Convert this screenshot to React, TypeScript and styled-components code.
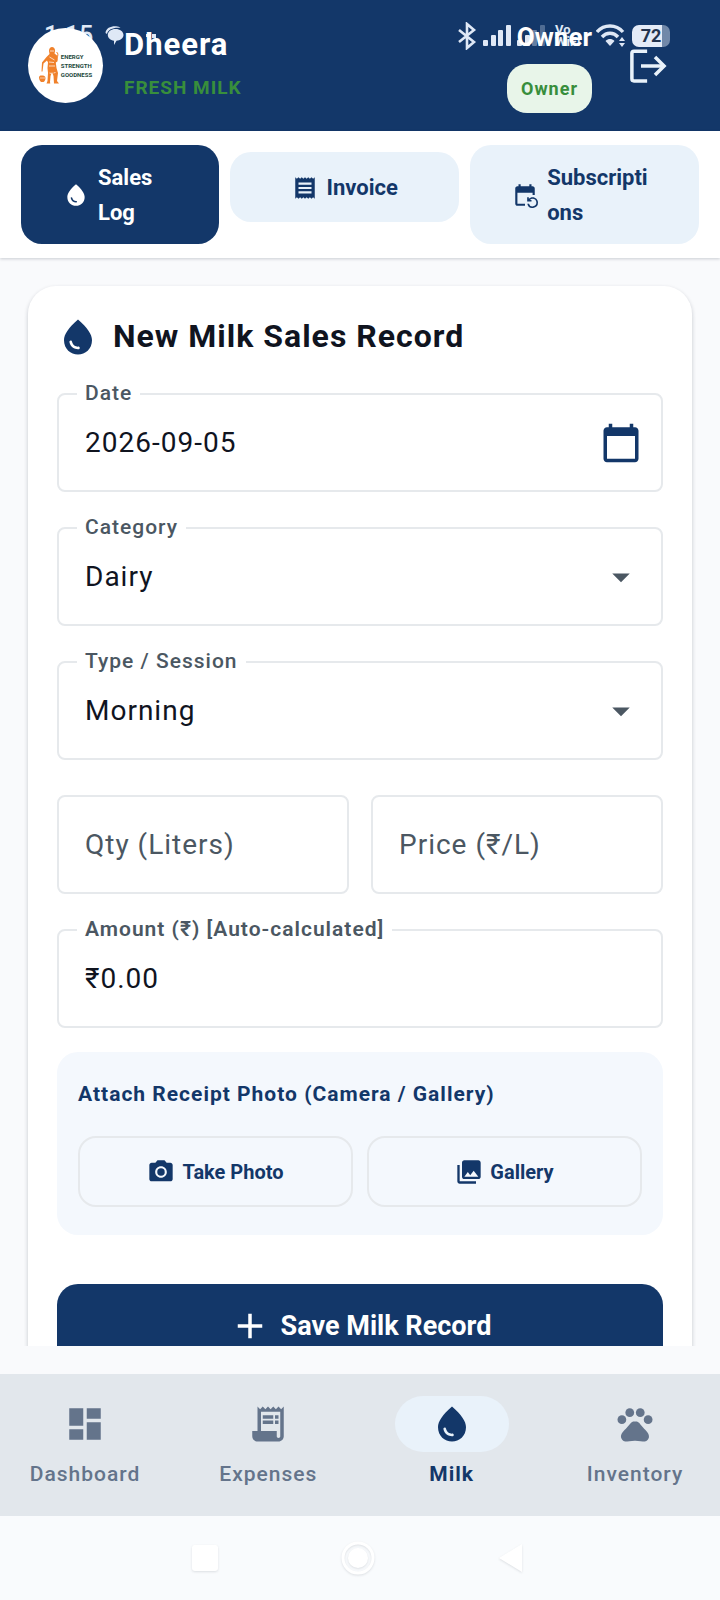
import { useState } from 'react';
import type { ReactNode } from 'react';
import styled, { createGlobalStyle } from 'styled-components';
import {
  MdAdd,
  MdArrowDropDown,
  MdCalendarToday,
  MdCameraAlt,
  MdDashboard,
  MdEventRepeat,
  MdPets,
  MdPhotoLibrary,
  MdReceipt,
  MdReceiptLong,
  MdWaterDrop,
} from 'react-icons/md';

const navy = '#133769';
const paleBlue = '#e9f2fa';
const line = '#e6e9ec';
const slate = '#64748b';

const GlobalStyle = createGlobalStyle`
  * {
    box-sizing: border-box;
  }

  body {
    margin: 0;
    background: #f9fafc;
    font-family: Roboto, 'Noto Sans', sans-serif;
  }

  button, input, select {
    font-family: inherit;
  }

  svg {
    display: block;
    flex-shrink: 0;
  }
`;

const Screen = styled.div`
  display: flex;
  flex-direction: column;
  height: 100vh;
  overflow: hidden;
`;

/* Header */

const Header = styled.header`
  position: relative;
  flex-shrink: 0;
  background: ${navy};
`;

// The system status bar is drawn edge to edge behind the header content
const StatusBar = styled.div`
  position: absolute;
  inset: 0 0 auto 0;
  display: flex;
  align-items: center;
  justify-content: space-between;
  height: 72px;
  padding: 0 50px 0 44px;
  color: #dfe8f6;
`;

const StatusGroup = styled.div`
  display: flex;
  align-items: center;
  gap: 6px;
`;

const Clock = styled.span`
  font-size: 25px;
  line-height: 28px;
  font-weight: 500;
  margin-right: 6px;
`;

const Carrier = styled.span`
  display: flex;
  flex-direction: column;
  width: 39px;
  padding-left: 4px;
  font-size: 13px;
  line-height: 12px;
  font-weight: 700;
`;

const Battery = styled.span`
  width: 38px;
  height: 22px;
  border-radius: 7px;
  background: linear-gradient(90deg, #e4ebf7 30px, #7188a9 30px);
  color: #23344f;
  font-size: 18px;
  line-height: 22px;
  font-weight: 700;
  text-align: center;
`;

const HeaderContent = styled.div`
  position: relative;
  display: flex;
  align-items: center;
  min-height: 131px;
  padding: 0 32px 0 28px;
`;

const Logo = styled.div`
  display: flex;
  align-items: center;
  justify-content: center;
  gap: 1px;
  width: 75px;
  height: 75px;
  border-radius: 50%;
  background: #fff;
`;

const LogoText = styled.div`
  color: #1d4a3c;
  font-size: 6px;
  line-height: 9px;
  font-weight: 700;
`;

const Brand = styled.div`
  flex: 1;
  margin-left: 21px;
`;

const BrandName = styled.h1`
  margin: 0;
  color: #fff;
  font-size: 31px;
  line-height: 44px;
  font-weight: 700;
  letter-spacing: 1px;
`;

const BrandTag = styled.p`
  margin: 0;
  color: #388e3c;
  font-size: 19px;
  line-height: 41px;
  font-weight: 700;
  letter-spacing: 1px;
`;

const Account = styled.div`
  display: flex;
  flex-direction: column;
  align-items: flex-end;
  gap: 8px;
`;

const AccountName = styled.span`
  color: #fff;
  font-size: 26px;
  line-height: 38px;
  font-weight: 700;
`;

const RoleBadge = styled.span`
  padding: 0 14px;
  border-radius: 20px;
  background: #e8f5e9;
  color: #388e3c;
  font-size: 18px;
  line-height: 49px;
  font-weight: 700;
  letter-spacing: 1px;
`;

const IconButton = styled.button`
  display: flex;
  align-items: center;
  justify-content: center;
  width: 80px;
  height: 80px;
  margin: 0;
  padding: 0;
  border: none;
  background: none;
  color: ${navy};
  cursor: pointer;
`;

const LogoutButton = styled(IconButton)`
  margin-left: 16px;
  color: #e9f2fa;
`;

/* Section tabs */

const Tabs = styled.nav`
  position: relative;
  display: grid;
  grid-template-columns: 13fr 15fr 15fr;
  gap: 11px;
  flex-shrink: 0;
  padding: 14px 21px;
  background: #fff;
  box-shadow: 0 1px 3px rgba(15, 23, 42, 0.2);
`;

const TabSlot = styled.div`
  display: flex;
  align-items: center;
  align-self: start;
  min-height: 84px;
`;

const Tab = styled.button<{ $active?: boolean }>`
  display: flex;
  align-items: center;
  justify-content: center;
  gap: 9px;
  width: 100%;
  min-height: 70px;
  padding: 15px 42px 14px;
  border: none;
  border-radius: 21px;
  background: ${({ $active }) => ($active ? navy : paleBlue)};
  color: ${({ $active }) => ($active ? '#fff' : navy)};
  font-size: 22px;
  line-height: 35px;
  font-weight: 700;
  text-align: left;
  overflow-wrap: anywhere;
  cursor: pointer;
`;

/* Form */

const Main = styled.main`
  flex: 1;
  min-height: 0;
  margin-bottom: 28px;
  padding: 28px 28px 0;
  overflow: hidden;
`;

const Card = styled.form`
  padding: 29px;
  border-radius: 28px;
  background: #fff;
  box-shadow: 0 2px 4px rgba(15, 23, 42, 0.22);
`;

const CardTitle = styled.h2`
  display: flex;
  align-items: center;
  gap: 14px;
  margin: 0 0 35px;
  color: #10141f;
  font-size: 32px;
  line-height: 43px;
  font-weight: 700;
  letter-spacing: 1px;

  svg {
    color: ${navy};
  }
`;

const Fields = styled.div`
  display: flex;
  flex-direction: column;
  gap: 35px;
`;

const FieldRow = styled.div`
  display: grid;
  grid-template-columns: 1fr 1fr;
  gap: 22px;
`;

const FieldBox = styled.div`
  position: relative;
  display: flex;
  align-items: center;
  height: 99px;
  border: 2px solid ${line};
  border-radius: 8px;
`;

const FieldLabel = styled.label<{ $resting?: boolean; $strong?: boolean }>`
  position: absolute;
  left: 18px;
  top: ${({ $resting }) => ($resting ? '50%' : '-2px')};
  transform: translateY(-50%);
  padding: 0 8px;
  background: #fff;
  color: #4b5762;
  font-size: ${({ $resting }) => ($resting ? '28px' : '21px')};
  line-height: 28px;
  font-weight: ${({ $resting, $strong }) => ($strong ? 600 : $resting ? 400 : 500)};
  letter-spacing: 1px;
  pointer-events: none;
`;

const valueStyle = `
  flex: 1;
  width: 100%;
  min-width: 0;
  height: 100%;
  padding: 0 26px;
  border: none;
  outline: none;
  background: transparent;
  color: #10141f;
  font-size: 28px;
  letter-spacing: 1px;
`;

const TextInput = styled.input`
  ${valueStyle}
`;

const SelectInput = styled.select`
  ${valueStyle}
  appearance: none;
`;

const Caret = styled.span`
  position: absolute;
  right: 19px;
  color: #4b5762;
  pointer-events: none;
`;

const Attach = styled.section`
  margin: 24px 0 49px;
  padding: 22px 21px 28px;
  border-radius: 21px;
  background: #f4f8fd;
`;

const AttachTitle = styled.h3`
  margin: 0 0 21px;
  color: ${navy};
  font-size: 21px;
  line-height: 41px;
  font-weight: 700;
  letter-spacing: 1px;
`;

const AttachActions = styled.div`
  display: grid;
  grid-template-columns: 1fr 1fr;
  gap: 14px;
`;

const OutlineButton = styled.button`
  display: flex;
  align-items: center;
  justify-content: center;
  gap: 7px;
  height: 71px;
  border: 2px solid ${line};
  border-radius: 18px;
  background: transparent;
  color: ${navy};
  font-size: 20px;
  font-weight: 700;
  cursor: pointer;
`;

const SaveButton = styled.button`
  display: flex;
  align-items: center;
  justify-content: center;
  gap: 10px;
  width: 100%;
  height: 84px;
  border: none;
  border-radius: 21px;
  background: ${navy};
  color: #fff;
  font-size: 27px;
  font-weight: 700;
  cursor: pointer;
`;

/* Bottom navigation */

const BottomNav = styled.nav`
  display: flex;
  justify-content: space-between;
  flex-shrink: 0;
  height: 142px;
  padding: 22px 28px 0;
  background: #e2e7ec;
`;

const NavLink = styled.a<{ $active?: boolean }>`
  display: flex;
  flex-direction: column;
  align-items: center;
  gap: 8px;
  width: 114px;
  color: ${({ $active }) => ($active ? navy : slate)};
  font-size: 21px;
  line-height: 28px;
  font-weight: ${({ $active }) => ($active ? 700 : 500)};
  letter-spacing: 1px;
  text-decoration: none;
`;

const NavPill = styled.span<{ $active?: boolean }>`
  display: flex;
  align-items: center;
  justify-content: center;
  width: 100%;
  height: 56px;
  border-radius: 28px;
  background: ${({ $active }) => ($active ? paleBlue : 'transparent')};
`;

const SystemNav = styled.div`
  display: flex;
  align-items: center;
  justify-content: center;
  gap: 117px;
  flex-shrink: 0;
  height: 84px;
  padding-right: 4px;
  background: #f9fbfd;

  svg {
    filter: drop-shadow(0 1px 1px rgba(15, 23, 42, 0.12));
  }
`;

const SignalIcon = ({ faint }: { faint?: boolean }) => (
  <svg width="28" height="24" viewBox="0 0 28 24" fill="currentColor">
    <rect x="0" y="16" width="5" height="6" rx="1" />
    <rect x="8" y="11" width="5" height="11" rx="1" />
    <rect x="15" y="6" width="5" height="16" rx="1" opacity={faint ? 0.4 : 1} />
    <rect x="23" y="1" width="5" height="21" rx="1" opacity={faint ? 0.3 : 1} />
  </svg>
);

const BluetoothIcon = () => (
  <svg width="20" height="28" viewBox="0 0 20 28" fill="none" stroke="currentColor" strokeWidth="2.6">
    <path d="M2 8l15 12-7 6V2l7 6L2 20" />
  </svg>
);

const WifiIcon = () => (
  <svg width="30" height="24" viewBox="0 0 30 24" fill="none" stroke="currentColor" strokeWidth="3.4">
    <path d="M1 8C8 0 20 0 27 8" />
    <path d="M6 13c4.500-5 11.500-5 16 0" />
    <path d="M14 22l-4.500-5c3-2.600 6-2.600 9 0z" fill="currentColor" stroke="none" />
    <path d="M26 13l3 4h-6zM26 23l3-4h-6z" fill="currentColor" stroke="none" />
  </svg>
);

const ChatIcon = () => (
  <svg width="19" height="20" viewBox="0 0 19 20" fill="currentColor">
    <path d="M0.500 7C1 2 6 0 11 0.300c2 .2 3.500.8 4.500 1.500C9 1 3 3 2 8z" />
    <path d="M10.500 3C15 3 18.500 5.600 18.500 9S15 14.500 11.500 14.800L9 19v-4.300C5.500 14.200 2.800 12 2.800 9c0-3.400 3.300-6 7.700-6z" />
  </svg>
);

const MoreMarks = () => (
  <svg width="34" height="20" viewBox="0 0 34 20" fill="currentColor">
    <rect x="16" y="8" width="5" height="3" />
    <rect x="22" y="8" width="4" height="4" />
  </svg>
);

const LogoutIcon = () => (
  <svg width="42" height="42" viewBox="0 0 24 24" fill="none" stroke="currentColor" strokeWidth="2">
    <path d="M11.500 3.500H4A1.200 1.200 0 0 0 2.800 4.700v14.600a1.200 1.200 0 0 0 1.200 1.200h7.500" />
    <path d="M8 12h13" />
    <path d="M16 6.800L21.200 12 16 17.200" />
  </svg>
);

const Mascot = () => (
  <svg width="21" height="38" viewBox="0 0 21 38" fill="#f0812b">
    <path d="M10 4c0-2.500 1.500-4 3-4s3.300 1.500 3 4l-.5 2.500 2.500 2c1 2 1 4 .4 6l-1.600 1 .7 5.500 1.500 5-1 8 2 2.500h-5l-.5-7.500-1.500-4-1.500 4-.5 6 .3 1.500H7.500l1-2.500.5-8-.5-5 .5-5.500-1-2-3.500 3-1 8h-1l.5-9L7.500 10l3-3z" />
    <path d="M0 30c1-2 2-1.500 3.200-1.500S6.500 29 6.500 31s-1 3.500-2 4H2C.8 34 0 32 0 30z" />
    <path d="M17.500 5c1.800 1 1.800 4 .3 6" fill="none" stroke="#f0812b" />
    <path d="M10.500 10l5 3M10 19h6M10 15l5 .5M10.500 26l2 .5M14.500 26l2-.5M11 4h4" fill="none" stroke="#fff" strokeWidth="0.7" />
    <path d="M1 31h5" stroke="#fff" strokeWidth="0.6" />
  </svg>
);

type FieldProps = {
  id: string;
  label: string;
  resting?: boolean;
  strong?: boolean;
  children: ReactNode;
};

const Field = ({ id, label, resting, strong, children }: FieldProps) => (
  <FieldBox>
    <FieldLabel htmlFor={id} $resting={resting} $strong={strong}>
      {label}
    </FieldLabel>
    {children}
  </FieldBox>
);

const navItems = [
  { name: 'Dashboard', Icon: MdDashboard },
  { name: 'Expenses', Icon: MdReceiptLong },
  { name: 'Milk', Icon: MdWaterDrop },
  { name: 'Inventory', Icon: MdPets },
];

const tabs = [
  { name: 'Sales Log', Icon: MdWaterDrop },
  { name: 'Invoice', Icon: MdReceipt },
  { name: 'Subscriptions', Icon: MdEventRepeat },
];

const App = () => {
  const [tab, setTab] = useState('Sales Log');
  const [date, setDate] = useState('2026-09-05');
  const [qty, setQty] = useState('');
  const [price, setPrice] = useState('');

  const amount = (Number(qty) || 0) * (Number(price) || 0);

  return (
    <Screen>
      <GlobalStyle />

      <Header>
        <StatusBar>
          <StatusGroup>
            <Clock>1:15</Clock>
            <ChatIcon />
            <MoreMarks />
          </StatusGroup>
          <StatusGroup>
            <BluetoothIcon />
            <SignalIcon />
            <SignalIcon faint />
            <Carrier>
              <span>Vo</span>
              <span>WiFi</span>
            </Carrier>
            <WifiIcon />
            <Battery>72</Battery>
          </StatusGroup>
        </StatusBar>
        <HeaderContent>
          <Logo>
            <Mascot />
            <LogoText>
              <div>ENERGY</div>
              <div>STRENGTH</div>
              <div>GOODNESS</div>
            </LogoText>
          </Logo>
          <Brand>
            <BrandName>Dheera</BrandName>
            <BrandTag>FRESH MILK</BrandTag>
          </Brand>
          <Account>
            <AccountName>Owner</AccountName>
            <RoleBadge>Owner</RoleBadge>
          </Account>
          <LogoutButton type="button" aria-label="Log out">
            <LogoutIcon />
          </LogoutButton>
        </HeaderContent>
      </Header>

      <Tabs>
        {tabs.map(({ name, Icon }) => (
          <TabSlot key={name}>
            <Tab type="button" $active={tab === name} onClick={() => setTab(name)}>
              <Icon size={26} />
              <span>{name}</span>
            </Tab>
          </TabSlot>
        ))}
      </Tabs>

      <Main>
        <Card onSubmit={(e) => e.preventDefault()}>
          <CardTitle>
            <MdWaterDrop size={42} />
            New Milk Sales Record
          </CardTitle>

          <Fields>
            <Field id="date" label="Date">
              <TextInput id="date" value={date} onChange={(e) => setDate(e.target.value)} />
              <IconButton type="button" aria-label="Pick a date">
                <MdCalendarToday size={42} />
              </IconButton>
            </Field>

            <Field id="category" label="Category">
              <SelectInput id="category" defaultValue="Dairy">
                <option>Dairy</option>
              </SelectInput>
              <Caret>
                <MdArrowDropDown size={42} />
              </Caret>
            </Field>

            <Field id="session" label="Type / Session">
              <SelectInput id="session" defaultValue="Morning">
                <option>Morning</option>
              </SelectInput>
              <Caret>
                <MdArrowDropDown size={42} />
              </Caret>
            </Field>

            <FieldRow>
              <Field id="qty" label="Qty (Liters)" resting={qty === ''}>
                <TextInput id="qty" value={qty} onChange={(e) => setQty(e.target.value)} />
              </Field>
              <Field id="price" label="Price (₹/L)" resting={price === ''}>
                <TextInput id="price" value={price} onChange={(e) => setPrice(e.target.value)} />
              </Field>
            </FieldRow>

            <Field id="amount" label="Amount (₹) [Auto-calculated]" strong>
              <TextInput id="amount" value={`₹${amount.toFixed(2)}`} readOnly />
            </Field>
          </Fields>

          <Attach>
            <AttachTitle>Attach Receipt Photo (Camera / Gallery)</AttachTitle>
            <AttachActions>
              <OutlineButton type="button">
                <MdCameraAlt size={28} />
                Take Photo
              </OutlineButton>
              <OutlineButton type="button">
                <MdPhotoLibrary size={28} />
                Gallery
              </OutlineButton>
            </AttachActions>
          </Attach>

          <SaveButton type="submit">
            <MdAdd size={42} />
            Save Milk Record
          </SaveButton>
        </Card>
      </Main>

      <BottomNav>
        {navItems.map(({ name, Icon }) => (
          <NavLink key={name} href={`#${name.toLowerCase()}`} $active={name === 'Milk'}>
            <NavPill $active={name === 'Milk'}>
              <Icon size={42} />
            </NavPill>
            {name}
          </NavLink>
        ))}
      </BottomNav>

      <SystemNav>
        <svg width="36" height="36" viewBox="0 0 36 36" fill="#fff">
          <rect x="5" y="5" width="26" height="26" rx="3" />
        </svg>
        <svg width="36" height="36" viewBox="0 0 36 36" fill="#fff">
          <circle cx="18" cy="18" r="15" fill="none" stroke="#fff" strokeWidth="3" />
          <circle cx="18" cy="18" r="10" />
        </svg>
        <svg width="36" height="36" viewBox="0 0 36 36" fill="#fff">
          <path d="M29 4v28L6 18z" />
        </svg>
      </SystemNav>
    </Screen>
  );
};

export default App;
